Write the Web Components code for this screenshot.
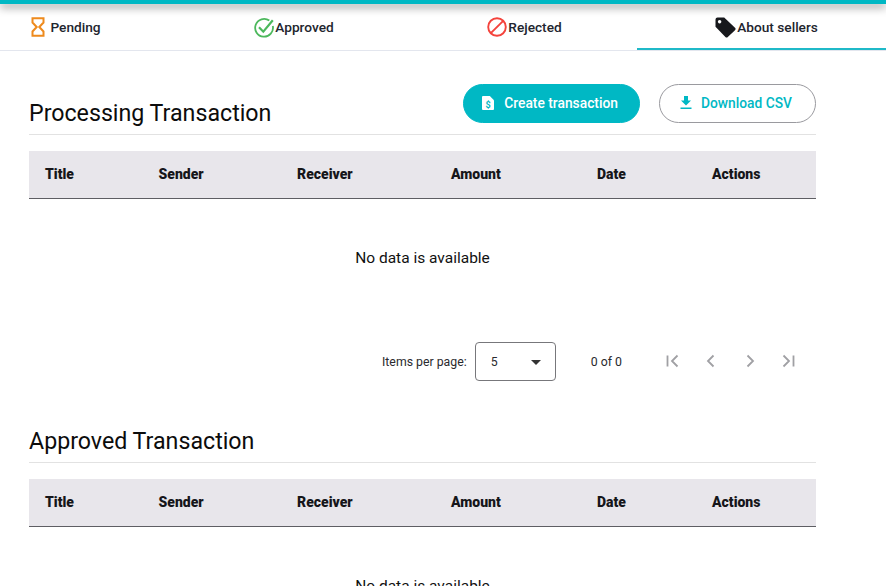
<!DOCTYPE html>
<html lang="en">
<head>
<meta charset="utf-8">
<title>Transactions</title>
<style>
    html, body { margin: 0; height: 586px; overflow: hidden; background: #fff; }
    body { font-family: Roboto, "Liberation Sans", sans-serif; color: #111; }
</style>
</head>
<body>
<tab-bar>
    <tab-item style="--pad-right: 45px; --gap: 5px">
        <svg slot="icon" width="14" height="20" viewBox="0 0 14 20" fill="none" stroke="#ee8a1d" stroke-width="2"><path d="M1.500 1.200h11v4.300L8.300 10l4.200 4.500v4.300h-11v-4.300L5.700 10 1.500 5.500z"/></svg>
        Pending
    </tab-item>
    <tab-item>
        <svg slot="icon" width="20" height="21" viewBox="0 0 20 21" fill="none" stroke="#4cb85c"><path d="M15.300 3.600A8.900 8.900 0 1 0 18.800 9" stroke-width="1.800"/><path d="M5 10.200l4.300 4.500 9.500-11.500" stroke-width="2.200"/></svg>
        Approved
    </tab-item>
    <tab-item style="--pad-left: 1px">
        <svg slot="icon" width="20" height="20" viewBox="0 0 20 20" fill="none" stroke="#f4433c" stroke-width="1.900"><circle cx="10" cy="10" r="8.800"/><path d="M3.800 16.200L16.200 3.800"/></svg>
        Rejected
    </tab-item>
    <tab-item active style="--pad-left: 10px">
        <svg slot="icon" width="21" height="21" viewBox="0 0 21 21" fill="#17181c"><path d="M0.500 2.500Q0.500 0.500 2.500 0.500H9.200L20 10.800a1.700 1.700 0 0 1 0 2.400L12.800 20a1.700 1.700 0 0 1-2.400 0L0.500 9.800zM4.600 3a1.700 1.700 0 1 0 0.020 0z" fill-rule="evenodd"/></svg>
        About sellers
    </tab-item>
</tab-bar>

<main-content>
    <tx-section heading="Processing Transaction">
        <pill-button slot="actions" filled>
            <svg slot="icon" width="12" height="14" viewBox="0 0 12 14"><path fill="#fff" d="M1 0h6.800L12 4.200V13a1 1 0 0 1-1 1H1a1 1 0 0 1-1-1V1a1 1 0 0 1 1-1z"/><text x="6" y="12" font-family="Roboto, sans-serif" font-size="9" font-weight="700" text-anchor="middle" fill="#00b8c4">$</text></svg>
            Create transaction
        </pill-button>
        <pill-button slot="actions">
            <svg slot="icon" width="12" height="13" viewBox="0 0 12 13" fill="#00b8c4"><path d="M4 0h4v4.500h3L6 9.500 1 4.500h3zM0.500 11.400h11V13H0.500z"/></svg>
            Download CSV
        </pill-button>
        <tx-table></tx-table>
        <tx-paginator></tx-paginator>
    </tx-section>
    <tx-section heading="Approved Transaction">
        <tx-table></tx-table>
    </tx-section>
</main-content>

<script>
class TabBar extends HTMLElement {
    constructor() {
        super();
        this.attachShadow({ mode: "open" });
        this.shadowRoot.innerHTML = `
            <style>
                :host { display: block; }
                .stripe {
                    height: 4px;
                    background: #00b8c4;
                    box-shadow: 0 3px 8px rgba(0, 0, 0, .5);
                }
                .tabs {
                    display: grid;
                    grid-template-columns: 177px 234px 226px 249px;
                    height: 46px;
                    border-bottom: 1px solid #e3e6ee;
                }
            </style>
            <div class="stripe"></div>
            <div class="tabs"><slot></slot></div>
        `;
    }
}
class TabItem extends HTMLElement {
    constructor() {
        super();
        this.attachShadow({ mode: "open" });
        this.shadowRoot.innerHTML = `
            <style>
                :host {
                    display: flex;
                    align-items: center;
                    justify-content: center;
                    gap: var(--gap, 1px);
                    padding: 0 var(--pad-right, 0) 0 var(--pad-left, 0);
                    font-size: 13.700px;
                    font-weight: 500;
                    color: #22252e;
                    height: 46px;
                }
                :host([active]) { box-shadow: inset 0 -2px 0 #1fb9c8; }
                .icon { display: flex; }
            </style>
            <span class="icon"><slot name="icon"></slot></span>
            <slot></slot>
        `;
    }
}
class MainContent extends HTMLElement {
    constructor() {
        super();
        this.attachShadow({ mode: "open" });
        this.shadowRoot.innerHTML = `
            <style>
                :host {
                    display: flex;
                    flex-direction: column;
                    gap: 31px;
                    width: 787px;
                    padding: 33px 0 0 29px;
                }
            </style>
            <slot></slot>
        `;
    }
}
class TxSection extends HTMLElement {
    constructor() {
        super();
        this.attachShadow({ mode: "open" });
        this.shadowRoot.innerHTML = `
            <style>
                :host { display: block; }
                .head {
                    display: flex;
                    justify-content: space-between;
                    height: 50px;
                    margin-bottom: 16px;
                    border-bottom: 1px solid #e2e2e2;
                }
                h2 {
                    align-self: flex-end;
                    margin: 0 0 7px;
                    font-size: 23.2px;
                    font-weight: 400;
                    line-height: 28px;
                    color: #0c0c0c;
                }
                .actions { display: flex; gap: 19px; align-items: flex-start; }
            </style>
            <div class="head">
                <h2></h2>
                <div class="actions"><slot name="actions"></slot></div>
            </div>
            <slot></slot>
        `;
        this.shadowRoot.querySelector("h2").textContent = this.getAttribute("heading");
    }
}
class PillButton extends HTMLElement {
    constructor() {
        super();
        this.attachShadow({ mode: "open" });
        this.shadowRoot.innerHTML = `
            <style>
                :host {
                    display: inline-flex;
                    align-items: center;
                    gap: 9px;
                    height: 39px;
                    box-sizing: border-box;
                    padding: 0 23px 2px 20px;
                    border-radius: 20px;
                    border: 1px solid #9a9a9f;
                    color: #00b8c4;
                    font-size: 13.800px;
                    font-weight: 500;
                }
                :host([filled]) {
                    gap: 10px;
                    background: #00b8c4;
                    border-color: #00b8c4;
                    color: #fff;
                    padding: 0 21px 2px 18px;
                }
                .icon { display: flex; }
            </style>
            <span class="icon"><slot name="icon"></slot></span>
            <slot></slot>
        `;
    }
}
class TxTable extends HTMLElement {
    columns = ["Title", "Sender", "Receiver", "Amount", "Date", "Actions"];
    constructor() {
        super();
        this.attachShadow({ mode: "open" });
        this.shadowRoot.innerHTML = `
            <style>
                :host { display: block; }
                .head {
                    display: grid;
                    grid-template-columns: 113.500px 138.500px 154px 146px 115px 1fr;
                    align-items: center;
                    box-sizing: border-box;
                    height: 48px;
                    padding: 0 0 2px 16px;
                    background: #e8e6eb;
                    border-bottom: 1px solid #5e5e63;
                    font-size: 14px;
                    font-weight: 900;
                    color: #16161a;
                }
                .empty {
                    display: flex;
                    align-items: center;
                    justify-content: center;
                    box-sizing: border-box;
                    height: 118px;
                    padding-bottom: 1px;
                    font-size: 15.500px;
                    color: #111;
                }
            </style>
            <div class="head">${this.columns.map(c => `<span>${c}</span>`).join("")}</div>
            <div class="empty">No data is available</div>
        `;
    }
}
class TxPaginator extends HTMLElement {
    constructor() {
        super();
        this.attachShadow({ mode: "open" });
        const nav = (d) => `<svg width="14" height="14" viewBox="0 0 14 14" fill="none" stroke="#a0a0a4" stroke-width="1.800"><path d="${d}"/></svg>`;
        this.shadowRoot.innerHTML = `
            <style>
                :host {
                    display: flex;
                    align-items: center;
                    height: 39px;
                    margin-top: 25px;
                    padding-left: 353px;
                    font-size: 12.300px;
                    color: #2a2a2e;
                }
                .select {
                    display: flex;
                    align-items: center;
                    justify-content: space-between;
                    box-sizing: border-box;
                    width: 81px;
                    height: 39px;
                    margin: 0 35px 0 8px;
                    padding: 0 14px 0 15px;
                    border: 1px solid #77777b;
                    border-radius: 4px;
                }
                .caret {
                    width: 0;
                    height: 0;
                    margin-top: 2px;
                    border: 5px solid transparent;
                    border-top-color: #333;
                    border-bottom: 0;
                }
                .nav { display: flex; gap: 24.500px; margin: -1px 0 0 44px; }
                .nav svg { display: block; }
            </style>
            <span>Items per page:</span>
            <div class="select"><span>5</span><span class="caret"></span></div>
            <span>0 of 0</span>
            <div class="nav">
                ${nav("M1.500 1.500v11M11.500 1.500L6 7l5.500 5.500")}
                ${nav("M9.500 1.500L4 7l5.500 5.500")}
                ${nav("M4.500 1.500L10 7l-5.500 5.500")}
                ${nav("M2.500 1.500L8 7l-5.500 5.500M12.500 1.500v11")}
            </div>
        `;
    }
}
customElements.define("tab-bar", TabBar);
customElements.define("tab-item", TabItem);
customElements.define("main-content", MainContent);
customElements.define("tx-section", TxSection);
customElements.define("pill-button", PillButton);
customElements.define("tx-table", TxTable);
customElements.define("tx-paginator", TxPaginator);
</script>
</body>
</html>
